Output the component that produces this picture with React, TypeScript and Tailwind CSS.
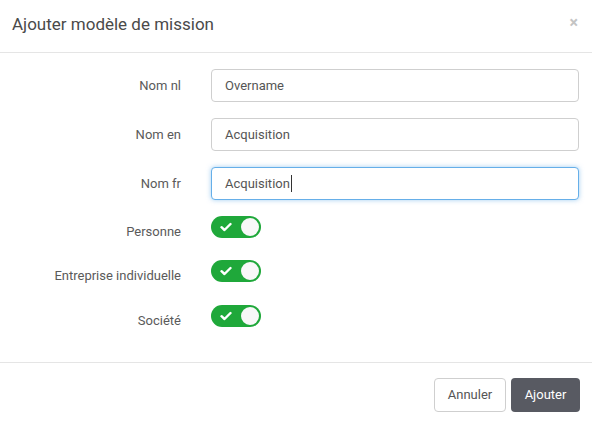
import React from "react";

const font = { fontFamily: "Roboto, 'Noto Sans', sans-serif" };

function Toggle() {
  return (
    <div className="relative w-[50px] h-[22px] rounded-full bg-[#1fa83a] flex items-center">
      <svg width="12" height="10" viewBox="0 0 12 10" className="ml-[9px]">
        <path d="M1.5 5.2 L4.5 8 L10.5 2" stroke="white" strokeWidth="2.4" fill="none" strokeLinecap="round" strokeLinejoin="round" />
      </svg>
      <div className="absolute right-[2px] top-[2px] w-[18px] h-[18px] rounded-full bg-[#f8f8f8]" />
    </div>
  );
}

function TextRow({ label, value, focused }: { label: string; value: string; focused?: boolean }) {
  return (
    <div className="flex items-center h-[33px]">
      <div className="w-[182px] pr-[1px] text-right text-[13px] text-[#5a5a5a]">{label}</div>
      <div
        className={
          "ml-[29px] w-[368px] h-[33px] rounded-[4px] bg-white flex items-center px-[13px] text-[13px] text-[#555] " +
          (focused
            ? "border border-[#66afe9] shadow-[0_0_5px_rgba(102,175,233,0.6)]"
            : "border border-[#cfcfcf]")
        }
      >
        <span>{value}</span>
        {focused && <span className="w-px h-[17px] bg-[#333] ml-px" />}
      </div>
    </div>
  );
}

function ToggleRow({ label }: { label: string }) {
  return (
    <div className="flex items-center h-[22px]">
      <div className="w-[182px] pr-[1px] pt-[10px] text-right text-[13px] text-[#5a5a5a]">{label}</div>
      <div className="ml-[29px]">
        <Toggle />
      </div>
    </div>
  );
}

export default function App() {
  return (
    <div className="w-[592px] h-[424px] bg-white flex flex-col" style={font}>
      <div className="h-[53px] border-b border-[#e5e5e5] flex items-center justify-between pl-[12px] pr-[14px]">
        <div className="text-[17px] text-[#4a4a4a] pb-[2px]">Ajouter modèle de mission</div>
        <div className="text-[#c4c4c4] text-[16px] font-bold leading-none pb-[6px]">×</div>
      </div>
      <div className="flex flex-col pt-[16px] h-[309px]">
        <TextRow label="Nom nl" value="Overname" />
        <div className="h-[16px]" />
        <TextRow label="Nom en" value="Acquisition" />
        <div className="h-[16px]" />
        <TextRow label="Nom fr" value="Acquisition" focused />
        <div className="h-[16px]" />
        <ToggleRow label="Personne" />
        <div className="h-[22px]" />
        <ToggleRow label="Entreprise individuelle" />
        <div className="h-[23px]" />
        <ToggleRow label="Société" />
      </div>
      <div className="border-t border-[#e5e5e5] flex justify-end items-start pt-[15px] pr-[12px] gap-[5px]">
        <button className="w-[72px] h-[34px] rounded-[4px] border border-[#cfcfcf] bg-white text-[13px] text-[#555]">
          Annuler
        </button>
        <button className="w-[69px] h-[34px] rounded-[4px] bg-[#585a62] text-[13px] text-white">
          Ajouter
        </button>
      </div>
    </div>
  );
}
